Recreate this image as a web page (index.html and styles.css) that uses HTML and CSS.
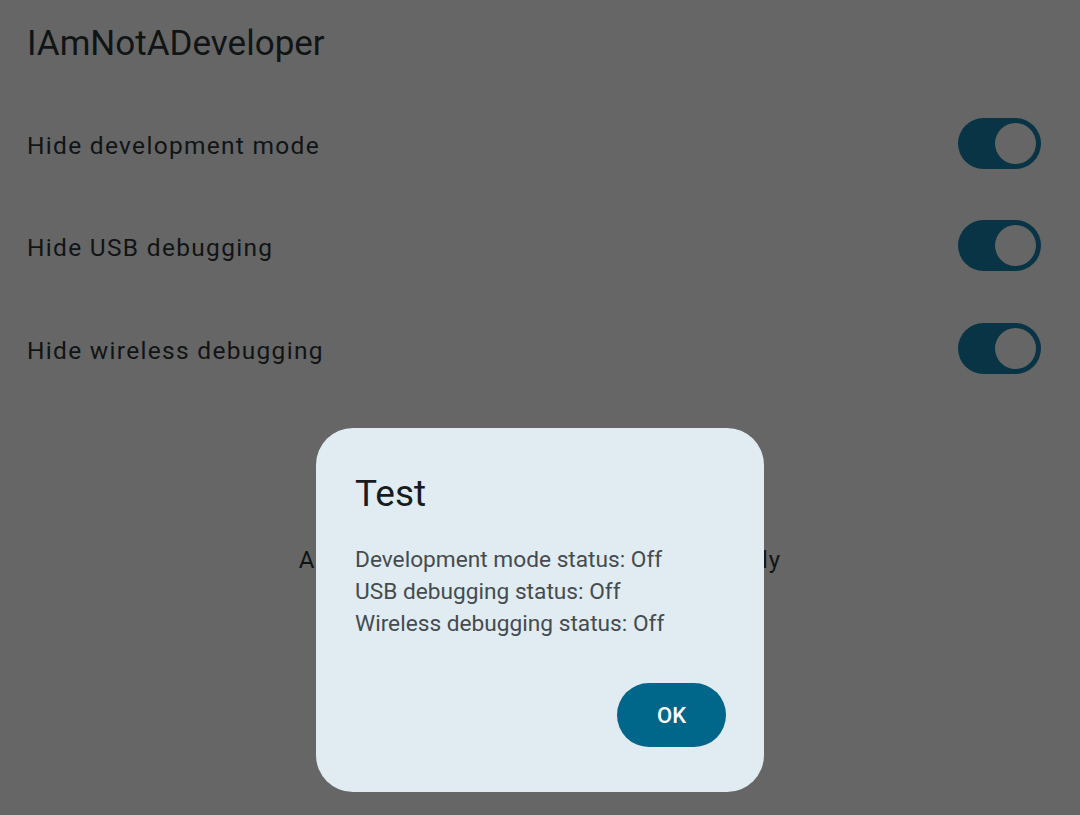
FILE: index.html
```html
<!DOCTYPE html>
<html lang="en">

<head>
    <meta charset="UTF-8">
    <meta name="viewport" content="width=device-width, initial-scale=1.0">
    <title>IAmNotADeveloper</title>
    <link rel="stylesheet" href="styles.css">
</head>

<body>

    <div class="app">
        <h1 class="title">IAmNotADeveloper</h1>

        <div class="row">
            <span class="label">Hide development mode</span>
            <span class="switch"><span class="thumb"></span></span>
        </div>
        <div class="row">
            <span class="label">Hide USB debugging</span>
            <span class="switch"><span class="thumb"></span></span>
        </div>
        <div class="row">
            <span class="label">Hide wireless debugging</span>
            <span class="switch"><span class="thumb"></span></span>
        </div>

        <p class="note">Apps must be restarted to apply correctly</p>
    </div>

    <!-- dialogo encima de todo -->
    <div class="scrim">
        <div class="dialog">
            <h2 class="dialog-title">Test</h2>
            <div class="dialog-text">
                <div>Development mode status: Off</div>
                <div>USB debugging status: Off</div>
                <div>Wireless debugging status: Off</div>
            </div>
            <div class="dialog-actions">
                <button class="ok">OK</button>
            </div>
        </div>
    </div>

</body>

</html>
```

FILE: styles.css
```css
body {
    margin: 0;
    font-family: Roboto, "Noto Sans", sans-serif;
    background-color: #666666;
    height: 815px;
    overflow: hidden;
}

.app {
    padding: 0 39px 0 27px;
    color: #111415;
}

.title {
    margin: 0;
    padding-top: 22px;
    height: 70px;
    font-size: 35px;
    font-weight: 400;
    line-height: 44px;
}

.row {
    display: flex;
    align-items: center;
    justify-content: space-between;
    height: 102.5px;
}

.label {
    font-size: 24.5px;
    letter-spacing: 1.3px;
    padding-top: 4px;
}

.switch {
    width: 83px;
    height: 51px;
    border-radius: 26px;
    background-color: #083446;
    display: flex;
    align-items: center;
    justify-content: flex-end;
    padding-right: 5px;
    box-sizing: border-box;
}

.thumb {
    width: 41px;
    height: 41px;
    border-radius: 50%;
    background-color: #666666;
}

.note {
    margin: 146px 0 0;
    text-align: center;
    font-size: 24px;
    letter-spacing: 1.05px;
    padding-left: 12px;
}

.scrim {
    position: absolute;
    top: 0;
    left: 0;
    right: 0;
    bottom: 0;
    display: flex;
    justify-content: center;
    align-items: flex-start;
    padding-top: 428px;
}

.dialog {
    width: 448px;
    height: 364px;
    box-sizing: border-box;
    background-color: #e0ebf2;
    border-radius: 37px;
    padding: 41px 38px 0 39px;
}

.dialog-title {
    margin: 0;
    font-size: 37px;
    font-weight: 400;
    line-height: 50px;
    color: #191c1e;
}

.dialog-text {
    margin-top: 25px;
    font-size: 22.7px;
    line-height: 32px;
    color: #454b50;
}

.dialog-actions {
    display: flex;
    justify-content: flex-end;
    margin-top: 43px;
}

.ok {
    width: 109px;
    height: 64px;
    border: none;
    border-radius: 32px;
    background-color: #00668a;
    color: #ffffff;
    font-family: Roboto, sans-serif;
    font-size: 22px;
    font-weight: 500;
}
```
